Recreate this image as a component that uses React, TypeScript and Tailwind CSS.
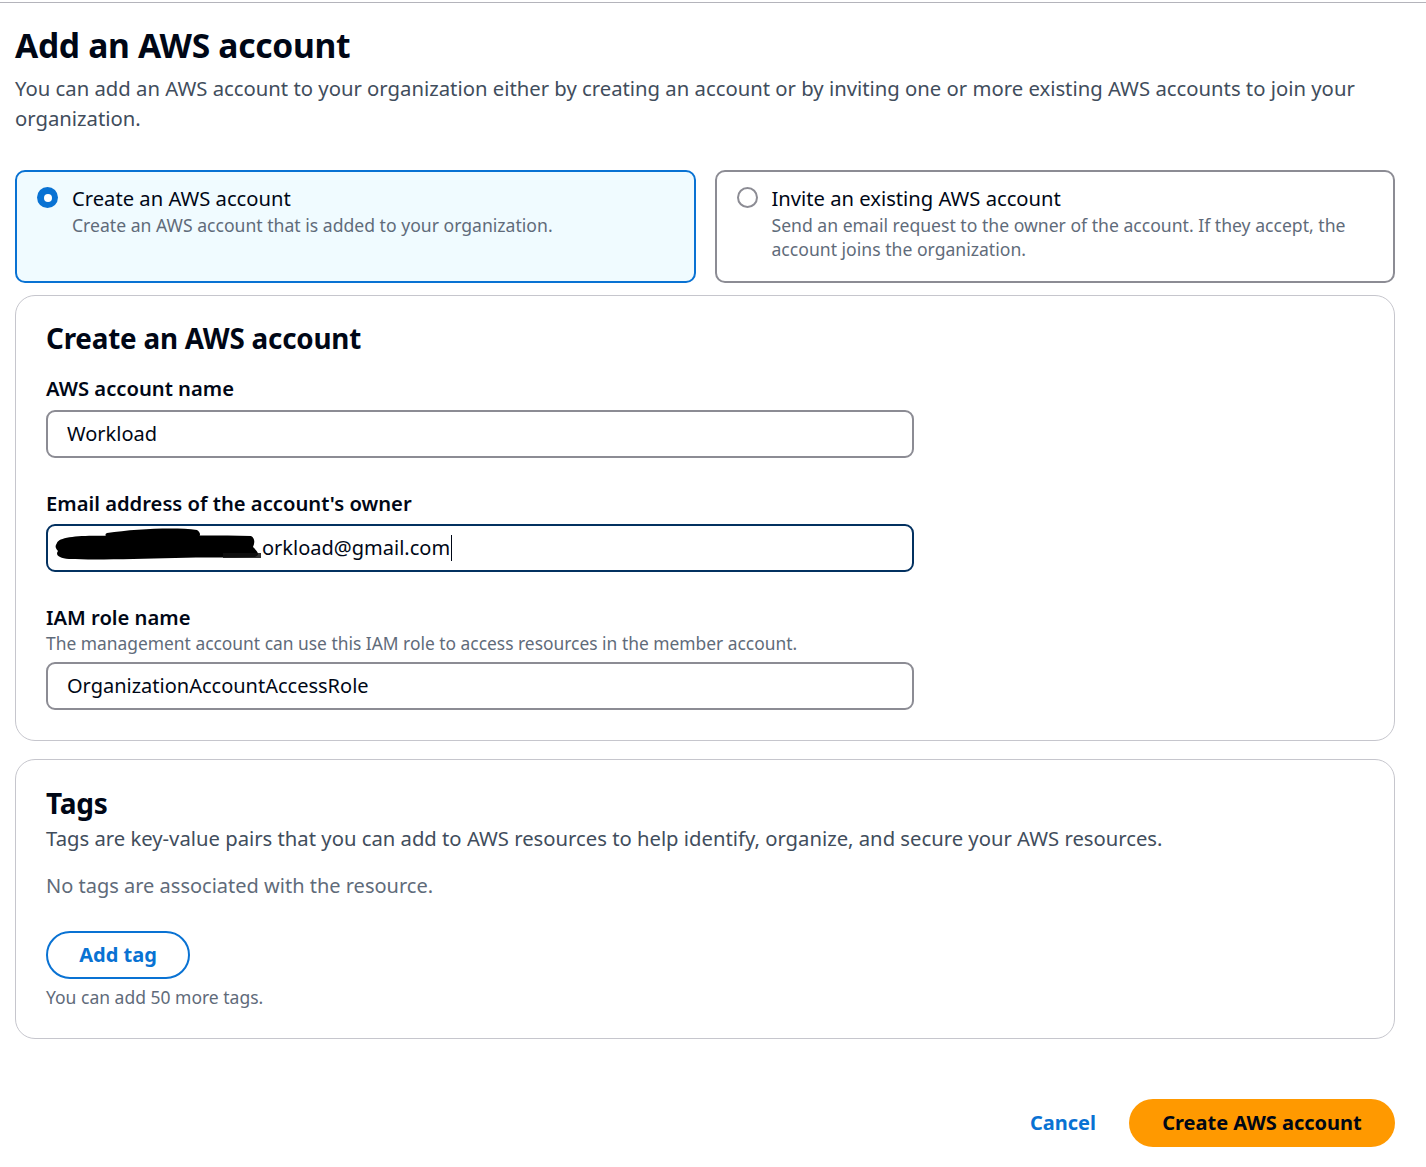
import React from 'react'

const font = { fontFamily: '"Noto Sans", "Open Sans", Arial, sans-serif' }

function RadioCard({ selected, title, desc }: { selected?: boolean; title: string; desc: React.ReactNode }) {
  return (
    <div
      className={
        selected
          ? 'flex-1 h-[113px] rounded-[10px] border-2 border-[#0972d3] bg-[#f0fbff] pl-[20px] pr-[19px] pt-[11px]'
          : 'flex-1 h-[113px] rounded-[10px] border-2 border-[#8c8c94] bg-white pl-[20px] pr-[19px] pt-[11px]'
      }
    >
      <div className="flex gap-[14px]">
        <div className="pt-[4px]">
          {selected ? (
            <div className="w-[21px] h-[21px] rounded-full bg-[#0972d3] flex items-center justify-center">
              <div className="w-[8px] h-[8px] rounded-full bg-white" />
            </div>
          ) : (
            <div className="w-[21px] h-[21px] rounded-full border-2 border-[#8c8c94] bg-white" />
          )}
        </div>
        <div>
          <div className="text-[20.2px] leading-[30px] text-[#000716]">{title}</div>
          <div className="text-[17.6px] leading-[24px] text-[#5f6b7a]">{desc}</div>
        </div>
      </div>
    </div>
  )
}

function TextField({ value, focused }: { value: React.ReactNode; focused?: boolean }) {
  return (
    <div
      className={
        focused
          ? 'relative w-[868px] h-[48px] rounded-[9px] border-2 border-[#033160] flex items-center px-[19px] text-[20px] text-[#000716]'
          : 'relative w-[868px] h-[48px] rounded-[9px] border-2 border-[#8c8c94] flex items-center px-[19px] text-[20px] text-[#000716]'
      }
    >
      {value}
    </div>
  )
}

// black marker scribble hiding the first part of the address
function Redaction() {
  return (
    <svg className="absolute left-[7px] top-[1px]" width="210" height="34" viewBox="0 0 210 34">
      <path d="M52 6 C 80 2, 120 0, 142 3 C 146 6, 146 9, 142 11 L 60 12 C 52 12, 48 8, 52 6 Z" fill="#000" />
      <path
        d="M2 16 C 4 9, 30 8, 60 9 C 100 9, 150 8, 196 9 C 200 11, 200 16, 198 20 C 202 24, 206 28, 200 30 C 170 31, 150 30, 120 31 C 80 32, 40 33, 14 32 C 4 31, 0 28, 3 24 C 0 21, 0 19, 2 16 Z"
        fill="#000"
      />
      <path d="M168 26 L 206 26 L 206 31 L 168 31 Z" fill="#111" opacity="0.85" />
    </svg>
  )
}

function Panel({ children, className }: { children: React.ReactNode; className?: string }) {
  return (
    <div className={'rounded-[20px] border border-[#c6c6cd] bg-white px-[30px] ' + (className ?? '')}>{children}</div>
  )
}

export default function App() {
  return (
    <div style={font} className="w-[1426px] min-h-[1167px] bg-white text-[#000716]">
      <div className="h-[3px] border-t border-[#b4b4bb] mt-[2px]" />
      <div className="px-[15px] pr-[31px]">
        <h1 className="mt-[18px] text-[33.6px] leading-[44px] font-bold tracking-[-0.3px] text-[#000716]">Add an AWS account</h1>
        <p className="mt-[6px] text-[20.3px] leading-[30px] text-[#414d5c]">
          You can add an AWS account to your organization either by creating an account or by inviting one or more existing
          AWS accounts to join your organization.
        </p>

        <div className="mt-[37px] flex gap-[19px]">
          <RadioCard selected title="Create an AWS account" desc="Create an AWS account that is added to your organization." />
          <RadioCard
            title="Invite an existing AWS account"
            desc={
              <>
                Send an email request to the owner of the account. If they accept, the
                <br />
                account joins the organization.
              </>
            }
          />
        </div>

        <Panel className="mt-[12px] pt-[22px] pb-[30px]">
          <h2 className="text-[27.8px] leading-[40px] font-bold tracking-[-0.2px]">Create an AWS account</h2>
          <div className="mt-[16px] text-[20.2px] leading-[28px] font-semibold">AWS account name</div>
          <div className="mt-[8px]">
            <TextField value="Workload" />
          </div>

          <div className="mt-[31px] text-[20.2px] leading-[28px] font-semibold">Email address of the account's owner</div>
          <div className="mt-[7px]">
            <TextField
              focused
              value={
                <>
                  <Redaction />
                  <span className="pl-[195px]">orkload@gmail.com</span>
                  <span className="ml-[1px] w-px h-[26px] bg-[#000716]" />
                </>
              }
            />
          </div>

          <div className="mt-[31px] text-[20.2px] leading-[28px] font-semibold">IAM role name</div>
          <div className="text-[17.4px] leading-[24px] text-[#5f6b7a]">
            The management account can use this IAM role to access resources in the member account.
          </div>
          <div className="mt-[7px]">
            <TextField value="OrganizationAccountAccessRole" />
          </div>
        </Panel>

        <Panel className="mt-[18px] pt-[23px] pb-[29px]">
          <h2 className="text-[28px] leading-[40px] font-bold tracking-[-0.2px]">Tags</h2>
          <p className="text-[20.25px] leading-[30px] text-[#414d5c]">
            Tags are key-value pairs that you can add to AWS resources to help identify, organize, and secure your AWS resources.
          </p>
          <p className="mt-[18px] text-[20px] leading-[30px] text-[#5f6b7a]">No tags are associated with the resource.</p>
          <button className="mt-[30px] h-[48px] w-[144px] rounded-full border-2 border-[#0972d3] text-[20px] font-bold text-[#0972d3]">
            Add tag
          </button>
          <div className="mt-[6px] text-[17.5px] leading-[24px] text-[#5f6b7a]">You can add 50 more tags.</div>
        </Panel>

        <div className="mt-[60px] flex justify-end items-center gap-[33px]">
          <button className="text-[20px] font-bold text-[#0972d3]">Cancel</button>
          <button className="h-[48px] w-[266px] rounded-full bg-[#ff9900] text-[20px] font-bold text-[#000716]">
            Create AWS account
          </button>
        </div>
      </div>
    </div>
  )
}
